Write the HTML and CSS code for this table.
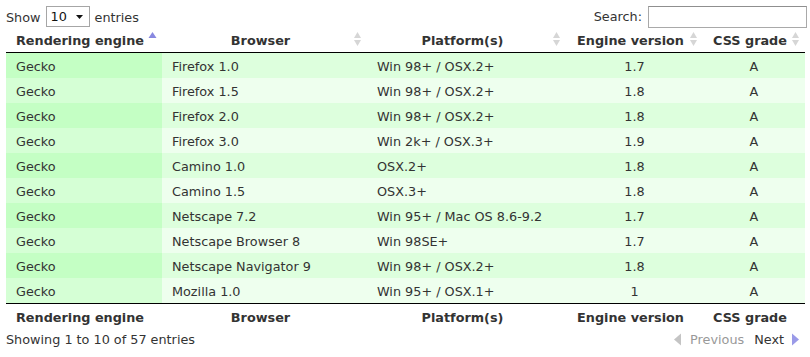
FILE: index.html
```html
<!DOCTYPE html>
<html>
<head>
<meta charset="utf-8">
<link rel="stylesheet" href="styles.css">
</head>
<body>
<div class="wrapper">
  <div class="top">
    <div class="length">Show <span class="sel">10<svg class="caret" width="7" height="4" viewBox="0 0 7 4"><polygon points="0,0 7,0 3.5,4" fill="#111"/></svg></span> entries</div>
    <div class="filter">Search: <span class="search"></span></div>
  </div>
  <table class="display">
    <colgroup>
      <col class="c1"><col class="c2"><col class="c3"><col class="c4"><col class="c5">
    </colgroup>
    <thead>
      <tr>
        <th>Rendering engine<svg class="sort" width="9" height="16" viewBox="0 0 9 16"><polygon points="4.5,1 8.5,7 0.5,7" fill="#8888e0"/></svg></th>
        <th>Browser<svg class="sort" width="9" height="16" viewBox="0 0 9 16"><polygon points="4.5,1 8,7 1,7" fill="#d6d6d6"/><polygon points="1,9 8,9 4.5,15" fill="#d6d6d6"/></svg></th>
        <th>Platform(s)<svg class="sort" width="9" height="16" viewBox="0 0 9 16"><polygon points="4.5,1 8,7 1,7" fill="#d6d6d6"/><polygon points="1,9 8,9 4.5,15" fill="#d6d6d6"/></svg></th>
        <th>Engine version<svg class="sort" width="9" height="16" viewBox="0 0 9 16"><polygon points="4.5,1 8,7 1,7" fill="#d6d6d6"/><polygon points="1,9 8,9 4.5,15" fill="#d6d6d6"/></svg></th>
        <th>CSS grade<svg class="sort" width="9" height="16" viewBox="0 0 9 16"><polygon points="4.5,1 8,7 1,7" fill="#d6d6d6"/><polygon points="1,9 8,9 4.5,15" fill="#d6d6d6"/></svg></th>
      </tr>
    </thead>
    <tbody>
      <tr class="odd"><td class="s1">Gecko</td><td>Firefox 1.0</td><td>Win 98+ / OSX.2+</td><td class="c">1.7</td><td class="c">A</td></tr>
      <tr class="even"><td class="s1">Gecko</td><td>Firefox 1.5</td><td>Win 98+ / OSX.2+</td><td class="c">1.8</td><td class="c">A</td></tr>
      <tr class="odd"><td class="s1">Gecko</td><td>Firefox 2.0</td><td>Win 98+ / OSX.2+</td><td class="c">1.8</td><td class="c">A</td></tr>
      <tr class="even"><td class="s1">Gecko</td><td>Firefox 3.0</td><td>Win 2k+ / OSX.3+</td><td class="c">1.9</td><td class="c">A</td></tr>
      <tr class="odd"><td class="s1">Gecko</td><td>Camino 1.0</td><td>OSX.2+</td><td class="c">1.8</td><td class="c">A</td></tr>
      <tr class="even"><td class="s1">Gecko</td><td>Camino 1.5</td><td>OSX.3+</td><td class="c">1.8</td><td class="c">A</td></tr>
      <tr class="odd"><td class="s1">Gecko</td><td>Netscape 7.2</td><td>Win 95+ / Mac OS 8.6-9.2</td><td class="c">1.7</td><td class="c">A</td></tr>
      <tr class="even"><td class="s1">Gecko</td><td>Netscape Browser 8</td><td>Win 98SE+</td><td class="c">1.7</td><td class="c">A</td></tr>
      <tr class="odd"><td class="s1">Gecko</td><td>Netscape Navigator 9</td><td>Win 98+ / OSX.2+</td><td class="c">1.8</td><td class="c">A</td></tr>
      <tr class="even"><td class="s1">Gecko</td><td>Mozilla 1.0</td><td>Win 95+ / OSX.1+</td><td class="c">1</td><td class="c">A</td></tr>
    </tbody>
    <tfoot>
      <tr><th>Rendering engine</th><th>Browser</th><th>Platform(s)</th><th>Engine version</th><th>CSS grade</th></tr>
    </tfoot>
  </table>
  <div class="bottom">
    <div class="info">Showing 1 to 10 of 57 entries</div>
    <div class="paginate">
      <svg class="arrow" width="9" height="13" viewBox="0 0 9 13"><polygon points="8,0.5 8,12.5 1,6.5" fill="#c4c4c4"/></svg>
      <span class="prev">Previous</span>
      <span class="next">Next</span>
      <svg class="arrow" width="9" height="13" viewBox="0 0 9 13"><polygon points="1,0.5 1,12.5 8,6.5" fill="#9a9ae8"/></svg>
    </div>
  </div>
</div>
</body>
</html>
```

FILE: styles.css
```css
html, body {
  margin: 0;
  padding: 0;
  background: #fff;
}
body {
  font-family: "DejaVu Sans", Verdana, sans-serif;
  font-size: 12.8px;
  color: #333;
}
.wrapper {
  padding: 6px 5px 0 6px;
}
.top {
  display: flex;
  justify-content: space-between;
  align-items: center;
  height: 21px;
}
.length {
  display: flex;
  align-items: center;
  gap: 5px;
  padding-top: 1px;
}
.sel {
  position: relative;
  display: inline-flex;
  align-items: center;
  box-sizing: border-box;
  width: 44px;
  height: 21px;
  margin-top: -1px;
  padding-left: 4px;
  border: 1px solid #a6a6a6;
  background: #fff;
  color: #111;
}
.caret {
  position: absolute;
  right: 6px;
  top: 8px;
}
.filter {
  display: flex;
  align-items: center;
  gap: 6px;
  margin-right: -2px;
}
.search {
  display: inline-block;
  box-sizing: border-box;
  width: 159px;
  height: 22px;
  border: 1px solid #a9a9a9;
  border-top-color: #8f8f8f;
  background: #fff;
}
table.display {
  width: 100%;
  border-collapse: collapse;
  table-layout: fixed;
}
.c1 { width: 156px; }
.c2 { width: 205px; }
.c3 { width: 199px; }
.c4 { width: 137px; }
.c5 { width: 102px; }
table.display th {
  position: relative;
  padding: 4px 18px 2px 10px;
  line-height: 19px;
  font-weight: bold;
  text-align: center;
  white-space: nowrap;
}
table.display thead th {
  border-bottom: 1px solid #000;
}
table.display tfoot th {
  border-top: 1px solid #000;
}
table.display td {
  padding: 4px 10px 2px;
  line-height: 19px;
  white-space: nowrap;
}
table.display td.c {
  text-align: center;
}
.sort {
  position: absolute;
  right: 5px;
  top: 4px;
}
tr.odd { background: #ddffdd; }
tr.even { background: #eeffee; }
tr.odd td.s1 { background: #c4ffc4; }
tr.even td.s1 { background: #d5ffd5; }
.bottom {
  display: flex;
  justify-content: space-between;
  align-items: center;
  height: 21px;
  padding-top: 0;
}
.paginate {
  display: flex;
  align-items: center;
  padding-right: 5px;
}
.prev {
  color: #999;
  margin-left: 8px;
  margin-right: 10px;
}
.next {
  color: #333;
  margin-right: 7px;
}
```
